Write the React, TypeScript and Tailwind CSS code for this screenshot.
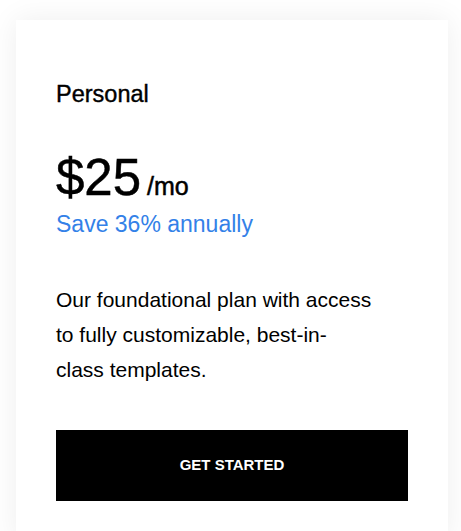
export default function App() {
  return (
    <div className="min-h-[531px] bg-white pt-[20px] pl-[16px] font-['Liberation_Sans',Arial,sans-serif]">
      <div className="w-[432px] min-h-[520px] bg-white px-[40px] pt-[60px] pb-[40px] shadow-[0_0_28px_rgba(0,0,0,0.07)]">
        <h2 className="text-[23.5px] leading-[28px] text-black [-webkit-text-stroke:0.4px_black]">Personal</h2>

        <div className="mt-[44px] flex items-baseline text-black [-webkit-text-stroke:0.5px_black]">
          <span className="text-[51px] leading-[51px]">$25</span>
          <span className="ml-[6px] text-[25px] leading-none">/mo</span>
        </div>
        <p className="mt-[7px] text-[23px] leading-[28px] text-[#3381e8]">Save 36% annually</p>

        <p className="mt-[44px] text-[21px] leading-[35px] text-black">
          Our foundational plan with access
          <br />
          to fully customizable, best-in-
          <br />
          class templates.
        </p>

        <button className="mt-[43px] flex h-[71px] w-full items-center justify-center bg-black text-[15px] font-bold text-white">
          GET STARTED
        </button>
      </div>
    </div>
  );
}
